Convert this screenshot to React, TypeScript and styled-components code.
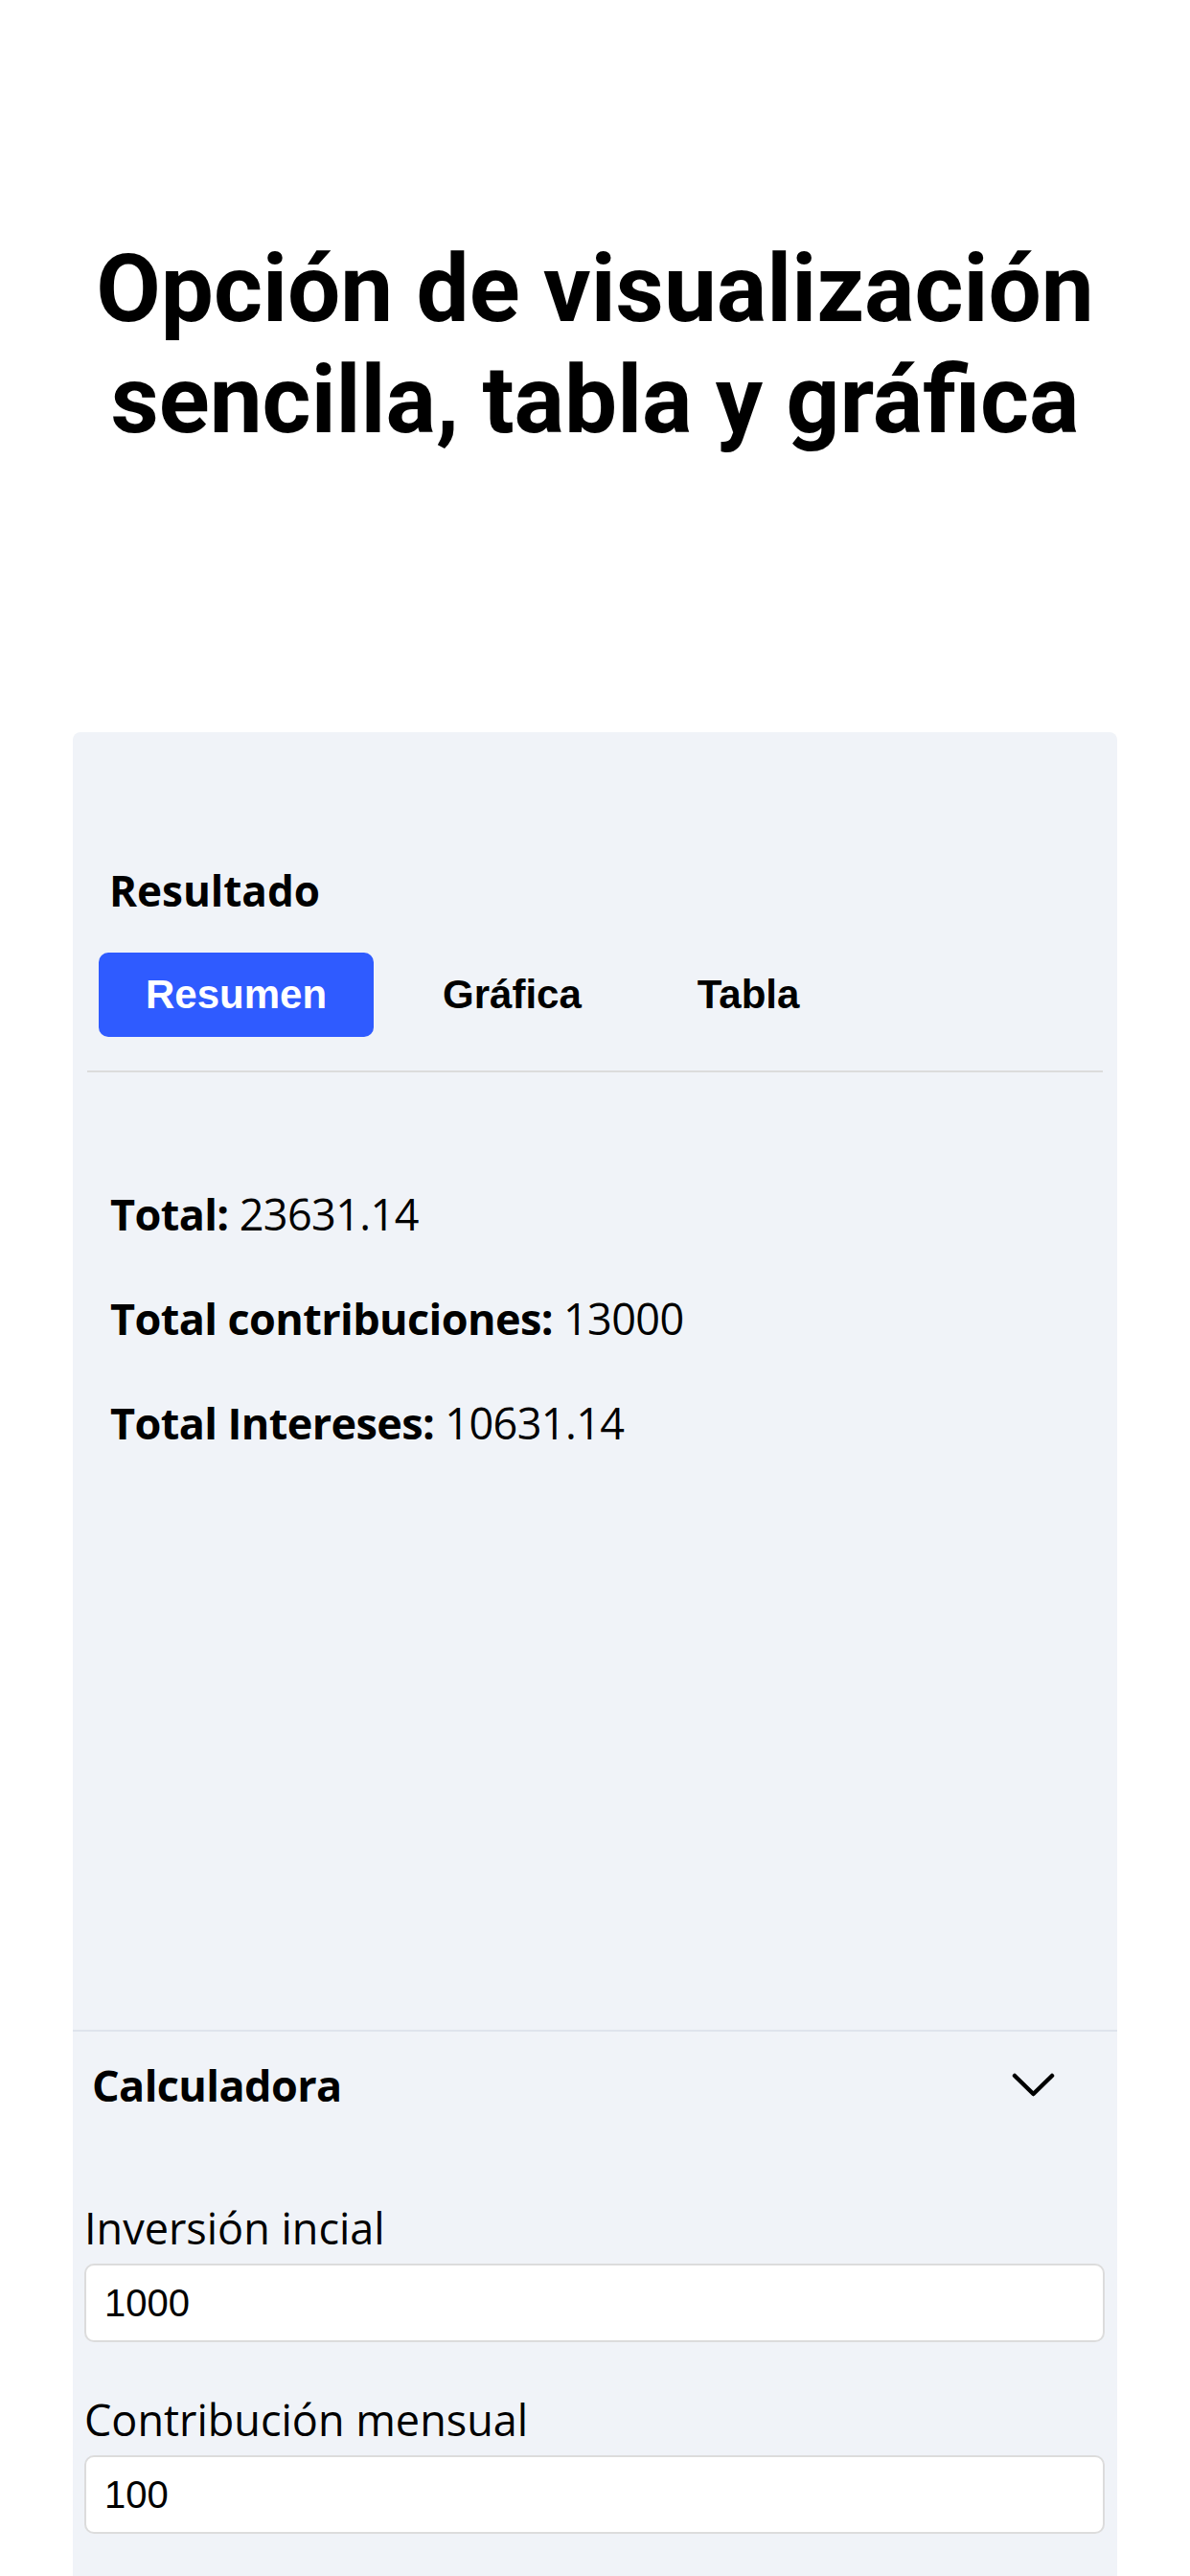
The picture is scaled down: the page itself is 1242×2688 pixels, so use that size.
import styled, { createGlobalStyle } from "styled-components";

const GlobalStyle = createGlobalStyle`
  body {
    margin: 0;
    background: #ffffff;
    font-family: "Open Sans", "Noto Sans", sans-serif;
    color: #000000;
  }
`;

const Page = styled.div`
  display: flex;
  flex-direction: column;
`;

const Title = styled.h1`
  margin: 244px 0 0;
  padding: 0 50px;
  font-family: Roboto, "Liberation Sans", sans-serif;
  font-weight: 700;
  font-size: 98px;
  line-height: 116px;
  text-align: center;
`;

const Card = styled.section`
  margin: 288px 76px 0;
  background: #f0f3f8;
  border-radius: 8px 8px 0 0;
  padding-bottom: 120px;
`;

const ResultPanel = styled.div`
  box-sizing: border-box;
  min-height: 1356px;
  padding: 137px 15px 0;
  border-bottom: 2px solid #dfe4ec;
`;

const PanelTitle = styled.h2`
  margin: 0;
  padding-left: 23px;
  font-size: 44px;
  line-height: 56px;
  font-weight: 700;
`;

const TabRow = styled.div`
  display: flex;
  gap: 23px;
  margin-top: 37px;
  padding: 0 12px 35px;
  border-bottom: 2px solid #dcdcdc;
`;

const Tab = styled.button<{ $active?: boolean }>`
  padding: 20px 49px;
  border: none;
  border-radius: 10px;
  font-family: "Liberation Sans", Arial, sans-serif;
  font-size: 42px;
  line-height: 48px;
  font-weight: 700;
  color: ${(p) => (p.$active ? "#ffffff" : "#000000")};
  background: ${(p) => (p.$active ? "#2f5bff" : "transparent")};
`;

const Summary = styled.div`
  display: flex;
  flex-direction: column;
  gap: 45px;
  padding: 116px 0 0 24px;
`;

const SummaryLine = styled.p`
  margin: 0;
  font-size: 45px;
  letter-spacing: -0.6px;
  line-height: 64px;
`;

const Calculator = styled.div`
  padding: 28px 13px 0 12px;
`;

const CalcHeader = styled.div`
  display: flex;
  align-items: center;
  justify-content: space-between;
  padding: 0 52px 0 8px;
`;

const CalcTitle = styled.h3`
  margin: 0;
  font-size: 45px;
  letter-spacing: -0.6px;
  line-height: 56px;
  font-weight: 700;
`;

const Chevron = styled.svg`
  width: 45px;
  height: 26px;
`;

const Fields = styled.div`
  display: flex;
  flex-direction: column;
  gap: 53px;
  margin-top: 93px;
`;

const Field = styled.label`
  display: flex;
  flex-direction: column;
  gap: 9px;
`;

const FieldLabel = styled.span`
  font-size: 45px;
  line-height: 56px;
`;

const Input = styled.input`
  box-sizing: border-box;
  width: 100%;
  height: 82px;
  padding: 0 19px;
  border: 2px solid #dcdcdc;
  border-radius: 10px;
  background: #ffffff;
  font-family: "Liberation Sans", Arial, sans-serif;
  font-size: 40px;
  color: #000000;
  outline: none;
`;

const App = () => {
  const results = [
    { label: "Total:", value: "23631.14" },
    { label: "Total contribuciones:", value: "13000" },
    { label: "Total Intereses:", value: "10631.14" },
  ];
  const fields = [
    { label: "Inversión incial", value: "1000" },
    { label: "Contribución mensual", value: "100" },
  ];

  return (
    <Page>
      <GlobalStyle />
      <Title>Opción de visualización sencilla, tabla y gráfica</Title>
      <Card>
        <ResultPanel>
          <PanelTitle>Resultado</PanelTitle>
          <TabRow>
            <Tab $active>Resumen</Tab>
            <Tab>Gráfica</Tab>
            <Tab>Tabla</Tab>
          </TabRow>
          <Summary>
            {results.map((r) => (
              <SummaryLine key={r.label}>
                <strong>{r.label}</strong> {r.value}
              </SummaryLine>
            ))}
          </Summary>
        </ResultPanel>
        <Calculator>
          <CalcHeader>
            <CalcTitle>Calculadora</CalcTitle>
            <Chevron viewBox="0 0 45 26" fill="none">
              <polyline
                points="3,3 22.5,22 42,3"
                stroke="#000"
                strokeWidth="4.5"
                strokeLinecap="round"
                strokeLinejoin="round"
              />
            </Chevron>
          </CalcHeader>
          <Fields>
            {fields.map((f) => (
              <Field key={f.label}>
                <FieldLabel>{f.label}</FieldLabel>
                <Input defaultValue={f.value} />
              </Field>
            ))}
          </Fields>
        </Calculator>
      </Card>
    </Page>
  );
};

export default App;
